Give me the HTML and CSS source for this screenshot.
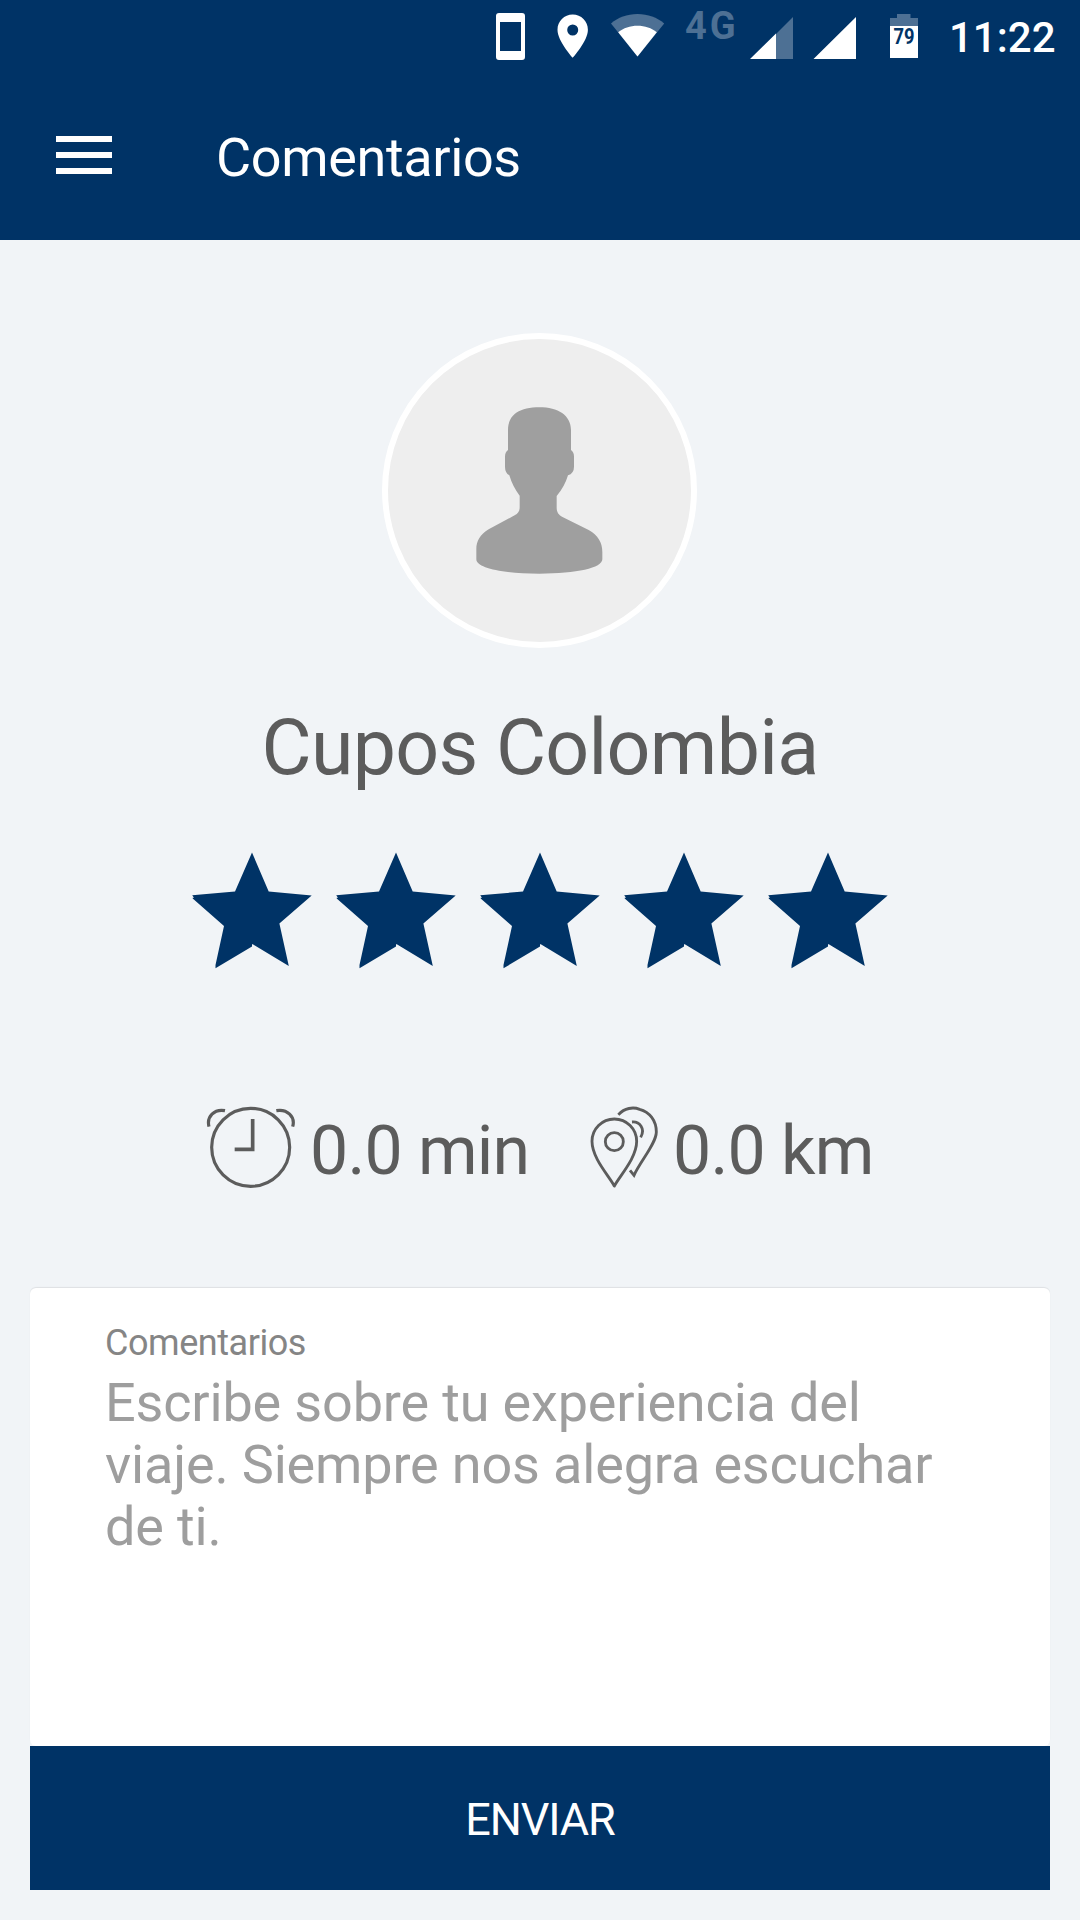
FILE: index.html
```html
<!DOCTYPE html>
<html lang="es">
<head>
<meta charset="utf-8">
<title>Comentarios</title>
<link rel="stylesheet" href="styles.css">
</head>
<body>
<header class="header">
  <div class="status">
    <svg class="status-icons" width="450" height="72" viewBox="480 0 450 72">
      <path class="on" fill-rule="evenodd" d="M499 13h23a3 3 0 0 1 3 3v41a3 3 0 0 1-3 3h-23a3 3 0 0 1-3-3V16a3 3 0 0 1 3-3zM500 22v29h21V22z"/>
      <path class="on" fill-rule="evenodd" d="M572.700 14.500c-8.500 0-15.200 6.700-15.200 15.200 0 11.300 15.200 28 15.200 28s15.200-16.700 15.200-28c0-8.500-6.700-15.200-15.200-15.200zM572.700 24.500a5.500 5.500 0 1 1 0 11 5.500 5.500 0 0 1 0-11z"/>
      <path class="dim" d="M637.500 56.500L611 23.500C618 17.500 627 14 637.500 14s19.500 3.500 26.700 9.500z"/>
      <path class="on" d="M637.500 56.500L618.200 32.300C623.500 28 630 25.700 637.500 25.700s14 2.300 19.300 6.600z"/>
      <text class="network" x="685" y="39">4G</text>
      <path class="dim" d="M776 34L793 17V59H776z"/>
      <path class="on" d="M750 59L776 33.500V59zM813.500 59L856 17V59z"/>
      <path class="dim" d="M897 14h13.500v4H918v8.500H890V18h7z"/>
      <path class="on" d="M890 26h28v32h-28z"/>
      <text class="battery-level" x="893.500" y="44" textLength="21" lengthAdjust="spacingAndGlyphs">79</text>
    </svg>
    <span class="clock">11:22</span>
  </div>
  <div class="appbar">
    <div class="menu"><span></span><span></span><span></span></div>
    <h1 class="title">Comentarios</h1>
  </div>
</header>
<main class="content">
  <div class="avatar">
    <svg width="303" height="303" viewBox="54 57 909 909">
      <path fill="#9f9f9f" d="M414 330C414 282 452 262 508 262S603 286 603 330V390Q612 396 612 410V440Q612 460 594 466Q584 500 560 528V562C560 578 566 584 576 590L656 630C684 646 697 668 697 696V718C697 744 620 761 508 761S319 744 319 718V688C319 664 330 644 356 628L434 586C444 580 449 574 449 562V527Q428 500 418 466Q405 458 405 440V410Q405 396 414 390Z"/>
    </svg>
  </div>
  <h2 class="name">Cupos Colombia</h2>
  <svg class="stars" width="696" height="118" viewBox="192 851 696 118">
    <defs>
      <path id="star" d="M252 852.500L268.700 891.500 311.700 895.400 279.400 923.500 288.800 966 252.800 944.300 252 944.300V946.500L215.500 968.300V965L224 926 192.700 898.500V897.700H194L192.200 895.300 235 891.500z"/>
    </defs>
    <use href="#star"/>
    <use href="#star" x="144"/>
    <use href="#star" x="288"/>
    <use href="#star" x="432"/>
    <use href="#star" x="576"/>
  </svg>
  <div class="stats">
    <div class="stat time">
      <svg class="line-icon" width="90" height="84" viewBox="49 48 270 252">
        <g stroke-width="9.500">
          <circle cx="183" cy="172" r="117"/>
          <path d="M189 87V178H135" stroke-width="11"/>
          <path d="M106 62C74 56 50 80 58 110M260 62C292 56 318 80 309 110"/>
        </g>
      </svg>
      <span>0.0 min</span>
    </div>
    <div class="stat distance">
      <svg class="line-icon" width="68" height="84" viewBox="61 48 204 252">
        <g stroke-width="8.500">
          <path d="M134 288C120 260 67 205 67 154A67 67 0 0 1 201 154C201 205 148 260 134 288Z" stroke-linejoin="round"/>
          <circle cx="134" cy="155" r="27"/>
          <path d="M146 74C165 54 190 50 210 58C240 66 260 92 260 126C260 160 212 214 193 256L181 241M187 96C210 94 228 116 213 142"/>
        </g>
      </svg>
      <span>0.0 km</span>
    </div>
  </div>
  <section class="card">
    <div class="label">Comentarios</div>
    <p class="hint">Escribe sobre tu experiencia del<br>viaje. Siempre nos alegra escuchar<br>de ti.</p>
  </section>
  <button class="send">ENVIAR</button>
</main>
</body>
</html>
```
FILE: styles.css
```css
* { box-sizing: border-box; margin: 0; padding: 0; }
body {
  width: 1080px;
  height: 1920px;
  background: #f1f4f7;
  font-family: Roboto, "Liberation Sans", sans-serif;
  color: #5c5c5c;
  overflow: hidden;
}
svg { display: block; }
.header { height: 240px; background: #003366; color: #fff; }
.status { height: 72px; padding-left: 480px; display: flex; }
.on { fill: #fff; }
.dim { fill: #4d7094; }
.network { fill: #4d7094; font-size: 38px; font-weight: 700; letter-spacing: 3px; }
.battery-level { fill: #003366; font-size: 22px; font-weight: 700; }
.clock { padding-left: 19px; font-size: 42px; font-weight: 500; line-height: 76px; }
.appbar { height: 168px; padding: 0 56px; display: flex; }
.menu { width: 56px; padding-top: 64px; display: flex; flex-direction: column; gap: 10px; }
.menu span { height: 6px; background: #fff; }
.title { margin-left: 104px; font-size: 54px; font-weight: 400; line-height: 172px; letter-spacing: -.37px; }
.content { padding: 93px 30px 0; display: flex; flex-direction: column; align-items: center; }
.avatar { width: 315px; height: 315px; margin-right: 1px; border: 6px solid #fff; border-radius: 50%; background: #eee; }
.name { height: 100px; margin-top: 49px; font-size: 77px; font-weight: 400; line-height: 103px; letter-spacing: -.7px; white-space: nowrap; }
.stars { margin-top: 54px; fill: #003366; }
.stats { width: 100%; height: 84px; margin-top: 137px; padding-left: 176px; display: flex; gap: 61px; }
.stat { display: flex; font-size: 68px; line-height: 90px; letter-spacing: -.8px; white-space: nowrap; }
.time { width: 323px; gap: 14px; }
.distance { gap: 15px; }
.line-icon { flex: none; fill: none; stroke: #5c5c5c; }
.card { width: 1020px; height: 458px; margin-top: 98px; padding: 32px 75px; border-radius: 6px; background: #fff; box-shadow: 0 -1px 1px rgba(0, 0, 0, .08); }
.label { height: 44px; font-size: 36px; line-height: 46px; letter-spacing: -.45px; color: #858585; }
.hint { margin-top: 8px; font-size: 54px; line-height: 62px; letter-spacing: -.16px; color: #9e9e9e; white-space: nowrap; }
.send { width: 1020px; height: 144px; padding-top: 3px; border: 0; background: #003366; color: #fff; font: 400 45px/141px Roboto, "Liberation Sans", sans-serif; letter-spacing: -1.1px; }
```
